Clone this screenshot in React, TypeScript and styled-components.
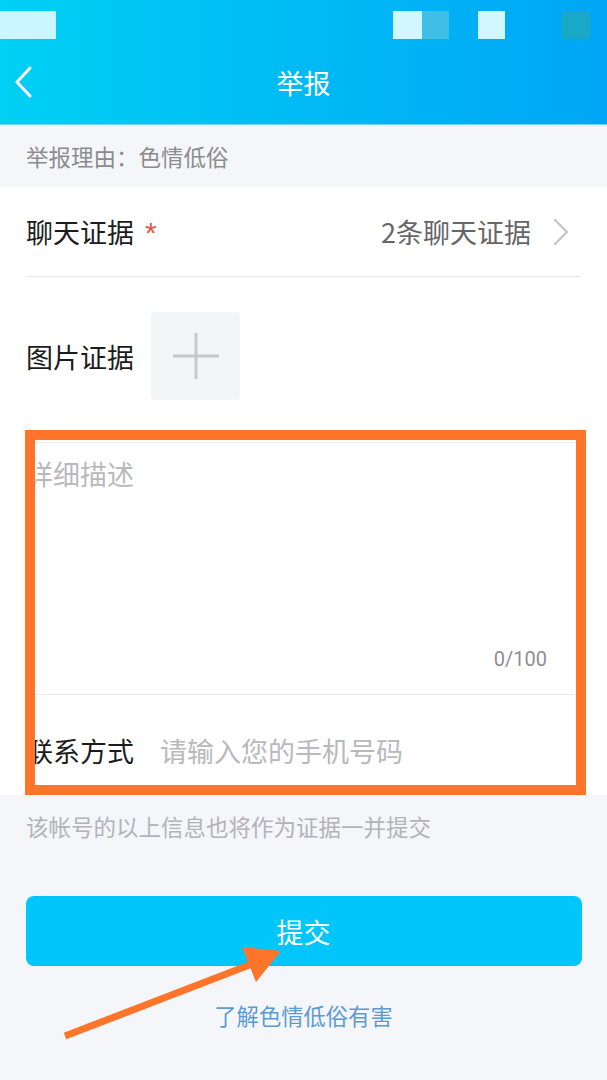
import styled, { createGlobalStyle } from "styled-components";

const GlobalStyle = createGlobalStyle`
  html, body {
    margin: 0;
    padding: 0;
    background: #f5f6fa;
  }
  body {
    font-family: "Noto Sans CJK SC", "Noto Sans", sans-serif;
  }
  * {
    box-sizing: border-box;
  }
`;

const Page = styled.div`
  position: relative;
  width: 607px;
  min-height: 1080px;
  background: #f5f6fa;
  overflow: hidden;
`;

const Header = styled.header`
  background: linear-gradient(90deg, #00d0f4 0%, #00b8f5 55%, #00a6f5 100%);
  border-bottom: 1px solid #6fdaf6;
`;

const StatusBar = styled.div`
  height: 42px;
  padding-top: 11px;
  display: flex;
`;

const StatusBlock = styled.div<{ $w: number; $c: string; $gap?: number }>`
  width: ${(p) => p.$w}px;
  height: 28px;
  background: ${(p) => p.$c};
  margin-left: ${(p) => p.$gap ?? 0}px;
`;

const NavBar = styled.div`
  position: relative;
  height: 82px;
  display: flex;
  align-items: center;
  justify-content: center;
`;

const BackButton = styled.div`
  position: absolute;
  left: 14px;
  top: 24px;
  width: 20px;
  height: 32px;
`;

const NavTitle = styled.h1`
  margin: 0 0 2px;
  font-size: 27px;
  font-weight: 400;
  color: #ffffff;
`;

const ReasonBar = styled.div`
  height: 62px;
  padding-left: 26px;
  display: flex;
  align-items: center;
  font-size: 22.5px;
  color: #8c8c8c;
`;

const FormCard = styled.section`
  position: relative;
  background: #ffffff;
`;

const Row = styled.div`
  margin: 0 26px;
  display: flex;
  align-items: center;
`;

const ChatRow = styled(Row)`
  height: 90px;
  border-bottom: 1.5px solid #e6e6e9;
`;

const Label = styled.span`
  font-size: 27px;
  color: #1c1c1c;
  white-space: nowrap;
`;

const Required = styled.span`
  display: inline-block;
  margin-left: 11px;
  font-family: "Liberation Sans", "Noto Sans", sans-serif;
  font-size: 30px;
  line-height: 1;
  color: #e2584a;
  position: relative;
  top: 1px;
`;

const RowValue = styled.span`
  margin-left: auto;
  font-size: 27px;
  color: #666666;
`;

const Chevron = styled.svg`
  margin-left: 22px;
  margin-right: 12px;
  flex-shrink: 0;
`;

const ImageRow = styled(Row)`
  padding: 35px 0 42px;
  border-bottom: 1px solid #ededf0;
  gap: 17px;
`;

const AddBox = styled.div`
  width: 89px;
  height: 88px;
  border-radius: 4px;
  background: #f4f5f9;
  display: flex;
  align-items: center;
  justify-content: center;
`;

const Description = styled.div`
  margin: 0 26px;
  height: 252px;
  padding-top: 11px;
  display: flex;
  flex-direction: column;
  border-bottom: 1.5px solid #ececef;
`;

const Placeholder = styled.span`
  font-size: 27px;
  color: #b9b9bd;
  white-space: nowrap;
`;

const Counter = styled.span`
  margin-top: auto;
  margin-bottom: 23px;
  align-self: flex-end;
  margin-right: 34px;
  font-family: "Roboto", "Noto Sans", sans-serif;
  font-size: 20px;
  color: #8e8e92;
`;

const ContactRow = styled(Row)`
  height: 100px;
  padding-top: 10px;
  gap: 26px;
`;

const Highlight = styled.div`
  position: absolute;
  left: 25px;
  top: 243px;
  width: 561px;
  height: 365px;
  border: 10.5px solid #fe7529;
  pointer-events: none;
`;

const Footer = styled.div`
  display: flex;
  flex-direction: column;
  align-items: center;
  padding: 16px 26px 0;
`;

const Note = styled.p`
  align-self: stretch;
  margin: 0;
  font-size: 22.5px;
  line-height: 30px;
  color: #b3b3b7;
`;

const SubmitButton = styled.button`
  all: unset;
  box-sizing: border-box;
  margin-top: 55px;
  width: 556px;
  height: 70px;
  border-radius: 8px;
  background: #00c6fb;
  color: #ffffff;
  font-family: "Noto Sans CJK SC", sans-serif;
  font-size: 27px;
  display: flex;
  align-items: center;
  justify-content: center;
`;

const LearnLink = styled.a`
  margin-top: 34px;
  font-size: 22.3px;
  line-height: 30px;
  color: #5b9bd3;
  text-decoration: none;
`;

const Arrow = styled.svg`
  position: absolute;
  left: 55px;
  top: 935px;
  pointer-events: none;
`;

export default function App() {
  return (
    <Page>
      <GlobalStyle />
      <Header>
        <StatusBar>
          <StatusBlock $w={56} $c="#c9f6ff" />
          <StatusBlock $w={29} $c="#d2f7ff" $gap={337} />
          <StatusBlock $w={27} $c="#3fbfe6" />
          <StatusBlock $w={27} $c="#d2f7ff" $gap={29} />
          <StatusBlock $w={28} $c="#19a9c6" $gap={57} />
        </StatusBar>
        <NavBar>
          <BackButton>
            <svg width="20" height="32" viewBox="0 0 20 32">
              <polyline
                points="16,2 3,16 16,30"
                fill="none"
                stroke="#ffffff"
                strokeWidth="3"
                strokeLinecap="round"
                strokeLinejoin="round"
              />
            </svg>
          </BackButton>
          <NavTitle>举报</NavTitle>
        </NavBar>
      </Header>

      <ReasonBar>举报理由：色情低俗</ReasonBar>

      <FormCard>
        <ChatRow>
          <Label>聊天证据</Label>
          <Required>*</Required>
          <RowValue>2条聊天证据</RowValue>
          <Chevron width="16" height="28" viewBox="0 0 16 28">
            <polyline
              points="2,2 14,14 2,26"
              fill="none"
              stroke="#c6c6c8"
              strokeWidth="2.4"
              strokeLinecap="round"
              strokeLinejoin="round"
            />
          </Chevron>
        </ChatRow>

        <ImageRow>
          <Label>图片证据</Label>
          <AddBox>
            <svg width="48" height="48" viewBox="0 0 48 48">
              <path d="M24 1v46M1 24h46" stroke="#c8c8cc" strokeWidth="3" />
            </svg>
          </AddBox>
        </ImageRow>

        <Description>
          <Placeholder>详细描述</Placeholder>
          <Counter>0/100</Counter>
        </Description>

        <ContactRow>
          <Label>联系方式</Label>
          <Placeholder>请输入您的手机号码</Placeholder>
        </ContactRow>

        <Highlight />
      </FormCard>

      <Footer>
        <Note>该帐号的以上信息也将作为证据一并提交</Note>
        <SubmitButton>提交</SubmitButton>
        <LearnLink>了解色情低俗有害</LearnLink>
      </Footer>

      <Arrow width="240" height="110" viewBox="0 0 240 110">
        <line x1="10" y1="101" x2="197" y2="29" stroke="#fe7529" strokeWidth="7" />
        <polygon points="187,12 226,16 201,47" fill="#fe7529" />
      </Arrow>
    </Page>
  );
}
